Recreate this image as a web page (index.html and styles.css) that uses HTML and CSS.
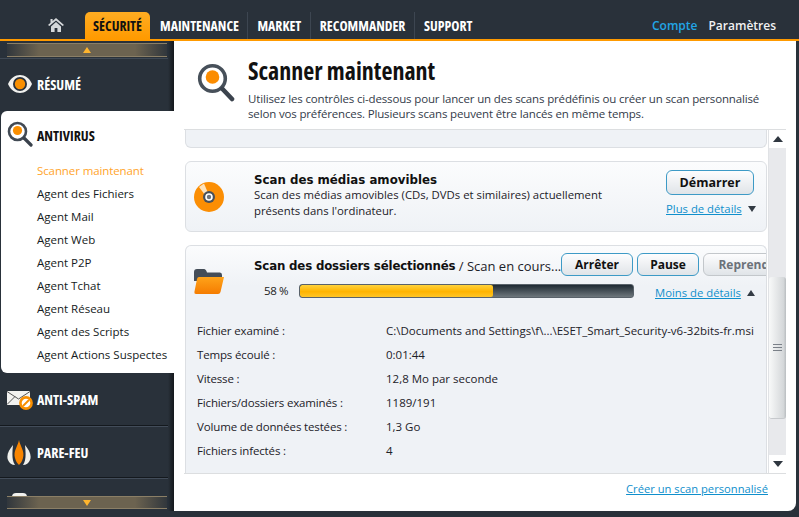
FILE: index.html
```html
<!DOCTYPE html>
<html lang="fr">
<head>
<meta charset="utf-8">
<title>Scanner maintenant</title>
<link rel="stylesheet" href="styles.css">
</head>
<body>
<div class="app">
  <header class="topbar">
    <svg class="home" viewBox="0 0 16 14" width="16" height="14"><path fill="#d5d8da" d="M8 0 L16 7 L14.6 8 L8 2.4 L1.4 8 L0 7 L2.5 4.8 V1 H4.6 V3 Z M3 8.4 L8 4 L13 8.4 V14 H9.4 V10 H6.6 V14 H3 Z"/></svg>
    <nav class="tabs">
      <a class="tab active">SÉCURITÉ</a>
      <a class="tab">MAINTENANCE</a>
      <a class="tab">MARKET</a>
      <a class="tab">RECOMMANDER</a>
      <a class="tab last">SUPPORT</a>
    </nav>
    <div class="account"><a class="compte">Compte</a><a class="params">Paramètres</a></div>
  </header>
  <div class="body">
    <aside class="sidebar">
      <div class="scrollbtn up"><i class="tri-up"></i></div>
      <div class="side-item first">
        <svg class="side-ico" viewBox="0 0 26 20" width="26" height="20"><path fill="#f1f1ee" d="M1 10 C6 -2 20 -2 25 10 C20 22 6 22 1 10 Z"/><circle cx="13" cy="10" r="7" fill="#2a323b"/><circle cx="13" cy="10" r="5.2" fill="#f98f00"/></svg>
        <span>RÉSUMÉ</span>
      </div>
      <div class="side-open">
        <div class="open-head">
          <svg class="open-ico" viewBox="0 0 26 26" width="26" height="26"><circle cx="10.5" cy="10.5" r="8.5" fill="#fff" stroke="#424a54" stroke-width="2.6"/><circle cx="10.5" cy="9.5" r="4.6" fill="#fb8f00"/><path d="M17 17 L24 24" stroke="#3a424c" stroke-width="3.2" stroke-linecap="round"/></svg>
          <span>ANTIVIRUS</span>
        </div>
        <ul class="sublist">
          <li class="on">Scanner maintenant</li>
          <li>Agent des Fichiers</li>
          <li>Agent Mail</li>
          <li>Agent Web</li>
          <li>Agent P2P</li>
          <li>Agent Tchat</li>
          <li>Agent Réseau</li>
          <li>Agent des Scripts</li>
          <li>Agent Actions Suspectes</li>
        </ul>
      </div>
      <div class="side-item line tall">
        <svg class="side-ico" viewBox="0 0 26 20" width="26" height="20"><path fill="#f2f2f0" d="M0 1 H23 V15 H0 Z"/><path fill="none" stroke="#555" stroke-width="1" d="M0 1.5 L11.5 9 L23 1.5 M0 14.5 L8 6.5"/><circle cx="19" cy="13" r="5.6" fill="#fff" stroke="#f98f00" stroke-width="2.6"/><path d="M16 16 L22 10" stroke="#f98f00" stroke-width="2"/></svg>
        <span>ANTI-SPAM</span>
      </div>
      <div class="side-item line fire">
        <svg class="side-ico flame" viewBox="0 0 24 26" width="24" height="26"><path fill="#f0f0ec" d="M6 5 C2 10 -1 15 1 20 C2 23 5 25 8 25 C5 21 5 14 6 5 Z M18 5 C22 10 25 15 23 20 C22 23 19 25 16 25 C19 21 19 14 18 5 Z"/><path fill="#f98500" d="M12 0 C13 6 18 11 16 18 C15 22 13 24 12 25 C11 24 9 22 8 18 C6 11 11 6 12 0 Z"/></svg>
        <span>PARE-FEU</span>
      </div>
      <div class="side-partial"><i class="blob"></i></div>
      <div class="scrollbtn down"><i class="tri-down"></i></div>
    </aside>
    <main class="main">
      <section class="head">
        <svg class="head-ico" viewBox="0 0 38 40" width="38" height="40"><circle cx="15.5" cy="15.5" r="12.8" fill="#fff" stroke="#47505a" stroke-width="3.6"/><circle cx="15.5" cy="14" r="6.8" fill="#fb8c00"/><path d="M25.5 26 L35 36" stroke="#3b434d" stroke-width="4.6" stroke-linecap="round"/></svg>
        <div class="head-text">
          <h1>Scanner maintenant</h1>
          <p>Utilisez les contrôles ci-dessous pour lancer un des scans prédéfinis ou créer un scan personnalisé selon vos préférences. Plusieurs scans peuvent être lancés en même temps.</p>
        </div>
      </section>
      <section class="scroller">
        <div class="cards">
          <div class="card stub"></div>
          <div class="card media">
            <svg class="card-ico" viewBox="0 0 30 30" width="30" height="30"><circle cx="15" cy="15" r="15" fill="#fb8e04"/><path fill="#fde3bd" d="M5 5 L10 1.6 L14 11 L11 13 Z"/><circle cx="15" cy="15" r="6" fill="#47505a"/><circle cx="15" cy="15" r="3.8" fill="#fff"/><circle cx="15" cy="15" r="2.2" fill="#6d747c"/></svg>
            <div class="media-text">
              <h2>Scan des médias amovibles</h2>
              <p>Scan des médias amovibles (CDs, DVDs et similaires) actuellement présents dans l'ordinateur.</p>
            </div>
            <div class="media-actions">
              <button class="btn start">Démarrer</button>
              <div class="more"><a>Plus de détails</a><i class="mini-down"></i></div>
            </div>
          </div>
          <div class="card running">
            <div class="run-top">
              <svg class="folder" viewBox="0 0 30 25" width="30" height="25"><path fill="#444d58" d="M0 3 Q0 0 3 0 H10 Q12 0 13 3.5 H26 Q28 3.5 28 6 V12 H0 Z"/><path fill="url(#fg)" d="M5 8 H30 L26.5 23 Q26 25 24 25 H2 Q0 25 0.4 23 L3 10 Q3.4 8 5 8 Z"/><defs><linearGradient id="fg" x1="0" y1="0" x2="0" y2="1"><stop offset="0" stop-color="#ffa31a"/><stop offset="1" stop-color="#f57c00"/></linearGradient></defs></svg>
              <div class="run-main">
                <div class="run-title"><div class="title-line"><h2 class="tight">Scan des dossiers sélectionnés</h2><span class="status"> / Scan en cours...</span></div>
                  <div class="run-btns"><button class="btn small stop">Arrêter</button><button class="btn small pause">Pause</button><button class="btn small off">Reprendre</button></div>
                </div>
                <div class="progress-row">
                  <span class="pct">58 %</span>
                  <div class="bar"><div class="fill" style="width:58%"></div></div>
                  <div class="more less"><a>Moins de détails</a><i class="mini-up"></i></div>
                </div>
              </div>
            </div>
            <dl class="stats">
              <dt>Fichier examiné :</dt><dd>C:\Documents and Settings\f\...\ESET_Smart_Security-v6-32bits-fr.msi</dd>
              <dt>Temps écoulé :</dt><dd>0:01:44</dd>
              <dt>Vitesse :</dt><dd>12,8 Mo par seconde</dd>
              <dt>Fichiers/dossiers examinés :</dt><dd>1189/191</dd>
              <dt>Volume de données testées :</dt><dd>1,3 Go</dd>
              <dt>Fichiers infectés :</dt><dd>4</dd>
            </dl>
          </div>
        </div>
        <div class="vscroll">
          <div class="arrow"><i class="sb-up"></i></div>
          <div class="track">
            <div class="thumb"><i class="grip"></i></div>
          </div>
          <div class="arrow"><i class="sb-down"></i></div>
        </div>
      </section>
      <footer class="foot"><a>Créer un scan personnalisé</a></footer>
    </main>
  </div>
</div>
</body>
</html>
```

FILE: styles.css
```css
* { box-sizing: border-box; }
html, body { margin: 0; padding: 0; }
body { background: #29313a; font-family: "Open Sans", "Noto Sans", sans-serif; }
.app { width: 799px; height: 517px; overflow: hidden; background: #29313a; display: flex; flex-direction: column; }
a { cursor: pointer; }
h1, h2, p, ul, dl, dd { margin: 0; padding: 0; }

.topbar { height: 41px; flex: none; display: flex; align-items: flex-end; border-bottom: 2px solid #ff9a00; padding-left: 48px; padding-right: 23px; }
.home { margin-bottom: 7px; }
.tabs { display: flex; align-items: flex-end; margin-left: 21px; }
.tab { height: 27px; display: flex; align-items: center; font-weight: 700; font-size: 13.8px; font-stretch: 75%; color: #fff; padding: 0 8.5px 0 9px; border-right: 1px solid #3d4651; white-space: nowrap; }
.tab.active { background: linear-gradient(#ffac22, #ff9a00); color: #111; border-radius: 5px 5px 0 0; width: 65px; padding: 0; justify-content: center; border: 0; margin-right: 1px; }
.tab.last { border-right: 0; }
.account { margin-left: auto; display: flex; gap: 11px; height: 27px; align-items: center; font-size: 12px; font-weight: 600; }
.compte { color: #22a5e6; }
.params { color: #f2f2f2; }

.body { flex: 1; display: flex; min-height: 0; padding-right: 3px; padding-bottom: 6px; }
.sidebar { width: 174px; flex: none; position: relative; display: flex; flex-direction: column; background: linear-gradient(90deg, #29313a 168px, #14181c 174px); }
.scrollbtn { height: 14px; margin: 2px 7px 0 7px; display: flex; align-items: center; justify-content: center; background: linear-gradient(90deg, rgba(120,105,80,.1), #6c6350 20%, #6c6350 80%, rgba(120,105,80,.1)); border-top: 1px solid #8b7f66; border-bottom: 1px solid #8b7f66; flex: none; }
.scrollbtn.up { margin-top: 2px; }
.tri-up { width: 0; height: 0; border-left: 4px solid transparent; border-right: 4px solid transparent; border-bottom: 6px solid #ffb52e; }
.tri-down { width: 0; height: 0; border-left: 4px solid transparent; border-right: 4px solid transparent; border-top: 6px solid #ffb52e; }
.side-item { height: 52px; display: flex; align-items: center; padding-left: 7px; margin-right: 6px; color: #fff; font-weight: 700; font-size: 14px; font-stretch: 75%; flex: none; }
.side-item span { margin-left: 4px; }
.side-item.first { height: 53px; border-top: 1px solid #3f4955; margin-top: 1px; padding-bottom: 2px; }
.side-item.line { border-bottom: 1px solid #14191e; box-shadow: 0 1px 0 #424c59; }
.side-item.tall { height: 53px; padding-top: 1px; }
.side-item.fire { padding-top: 2px; }
.flame { margin-right: 2px; }
.side-open { height: 262px; margin-left: 1px; background: #fff; border-radius: 6px 0 0 6px; flex: none; }
.open-head { height: 50px; display: flex; align-items: center; padding-left: 6px; padding-bottom: 1px; font-weight: 700; font-size: 14px; font-stretch: 75%; color: #111; }
.open-head .open-ico { margin-top: -4px; }
.open-head span { margin-left: 4px; }
.sublist { list-style: none; padding-left: 36px; margin-top: -2px; }
.sublist li { height: 23px; line-height: 23px; font-size: 11.5px; color: #151a22; white-space: nowrap; }
.sublist li.on { color: #ffa42b; letter-spacing: -.1px; }
.side-partial { flex: 1; min-height: 0; overflow: hidden; padding: 15px 0 0 12px; margin-right: 6px; }
.blob { display: block; width: 15px; height: 4px; border-radius: 8px 8px 0 0; background: #f1f1ee; margin-left: 0; }
.scrollbtn.down { margin: 0 7px 2px 7px; height: 13px; }

.main { flex: 1; background: #fff; border-radius: 0 0 8px 0; padding: 0 10px; display: flex; flex-direction: column; min-width: 0; }
.head { height: 89px; flex: none; display: flex; padding: 22px 0 0 13px; border-bottom: 1px solid #dcdee0; }
.head-ico { flex: none; }
.head-text { margin-left: 13px; margin-top: -6px; }
h1 { font-size: 24px; font-weight: 700; font-stretch: 75%; color: #111; line-height: 28px; }
.head-text p { font-size: 11.5px; line-height: 15px; color: #333b49; width: 530px; margin-top: 6px; letter-spacing: -.15px; }

.scroller { height: 344px; flex: none; display: flex; border-bottom: 1px solid #dcdee0; }
.cards { width: 582px; margin-left: 1px; flex: none; display: flex; flex-direction: column; gap: 13px; overflow: hidden; }
.card { flex: none; border: 1px solid #dcdfe3; background: linear-gradient(#fbfcfd, #eff2f6); border-radius: 6px; }
.card.stub { height: 18px; border-top: 0; border-radius: 0 0 6px 6px; background: #eff2f6; }
.card.media { height: 71px; display: flex; padding: 8px 11px 0 8px; }
.card-ico { margin-top: 12px; flex: none; }
.media-text { margin-left: 30px; width: 370px; }
h2 { font-family: "DejaVu Sans", sans-serif; font-size: 11.8px; font-weight: 700; color: #111; line-height: 20px; }
h2.tight { letter-spacing: -.18px; }
.media-text p { font-size: 11.35px; line-height: 16px; color: #1c2128; width: 360px; margin-top: -3px; }
.media-actions { margin-left: auto; width: 89px; display: flex; flex-direction: column; }
.btn { font-family: "Open Sans", "Noto Sans", sans-serif; font-weight: 700; font-size: 12px; color: #111; background: linear-gradient(#fdfdfe, #e0e4e8); border: 1px solid #3d9ac6; border-radius: 6px; padding: 0; }
.btn.start { height: 25px; width: 88px; font-size: 12.5px; }
.more { display: flex; align-items: center; gap: 6px; margin-top: 6px; }
.more a { font-size: 11.3px; color: #0f8fcc; text-decoration: underline; white-space: nowrap; }
.mini-down { width: 0; height: 0; border-left: 4px solid transparent; border-right: 4px solid transparent; border-top: 6px solid #333b44; }
.mini-up { width: 0; height: 0; border-left: 4px solid transparent; border-right: 4px solid transparent; border-bottom: 6px solid #333b44; }

.card.running { height: 230px; border-radius: 6px 6px 0 0; border-bottom: 0; background: linear-gradient(#fbfcfd, #eff2f6 40px); overflow: hidden; }
.run-top { display: flex; padding: 7px 0 0 8px; height: 73px; }
.folder { margin-top: 16px; flex: none; }
.run-main { margin-left: 30px; flex: 1; min-width: 0; }
.run-title { display: flex; height: 24px; }
.title-line { width: 307px; flex: none; padding-top: 3px; white-space: nowrap; display: flex; }
.status { font-size: 13px; color: #1c2128; line-height: 20px; white-space: pre; }
.run-btns { display: flex; gap: 4px; }
.btn.small { height: 23px; flex: none; }
.stop { width: 72px; }
.pause { width: 62px; }
.off { width: 94px; color: #6c727a; border-color: #c3c7cb; }
.progress-row { display: flex; align-items: flex-start; margin-top: 7px; }
.pct { width: 45px; font-size: 11.5px; line-height: 14px; padding-left: 10px; color: #222; white-space: nowrap; flex: none; letter-spacing: -.03em; }
.bar { width: 335px; height: 14px; flex: none; border-radius: 3px; background: linear-gradient(#1f2a33, #6e777c); overflow: hidden; border: 1px solid #59626a; }
.fill { height: 100%; border-radius: 2px; background: linear-gradient(#ffd23c, #ffb400 55%, #ffc526); }
.more.less { margin: 1px 0 0 21px; }
.stats { display: grid; grid-template-columns: 189px 1fr; padding: 0 0 0 11px; margin-top: 0; }
.stats dt, .stats dd { height: 24px; line-height: 24px; font-size: 11.5px; color: #1c2128; white-space: nowrap; }
.stats dt { letter-spacing: -.15px; }

.vscroll { width: 18px; margin-left: 1px; flex: none; display: flex; flex-direction: column; border-left: 1px solid #e0e2e5; }
.arrow { height: 18px; flex: none; display: flex; align-items: center; justify-content: center; background: #fff; }
.sb-up { width: 0; height: 0; border-left: 5px solid transparent; border-right: 5px solid transparent; border-bottom: 6px solid #2f3740; }
.sb-down { width: 0; height: 0; border-left: 5px solid transparent; border-right: 5px solid transparent; border-top: 6px solid #2f3740; }
.track { flex: 1; background: #e8e9ec; padding-top: 129px; }
.thumb { height: 142px; background: linear-gradient(90deg, #f8f9f9, #d5d8da 85%, #b9bdc0); border-radius: 3px; border-bottom: 1px solid #c6c9cc; display: flex; align-items: center; justify-content: center; }
.grip { display: block; width: 9px; height: 7px; border-top: 1px solid #7a8088; border-bottom: 1px solid #7a8088; background: linear-gradient(transparent 2px, #7a8088 2px, #7a8088 3px, transparent 3px); }

.foot { flex: 1; display: flex; justify-content: flex-end; padding: 7px 18px 0 0; }
.foot a { font-size: 11.2px; line-height: 15px; color: #0f8fcc; text-decoration: underline; }
```
